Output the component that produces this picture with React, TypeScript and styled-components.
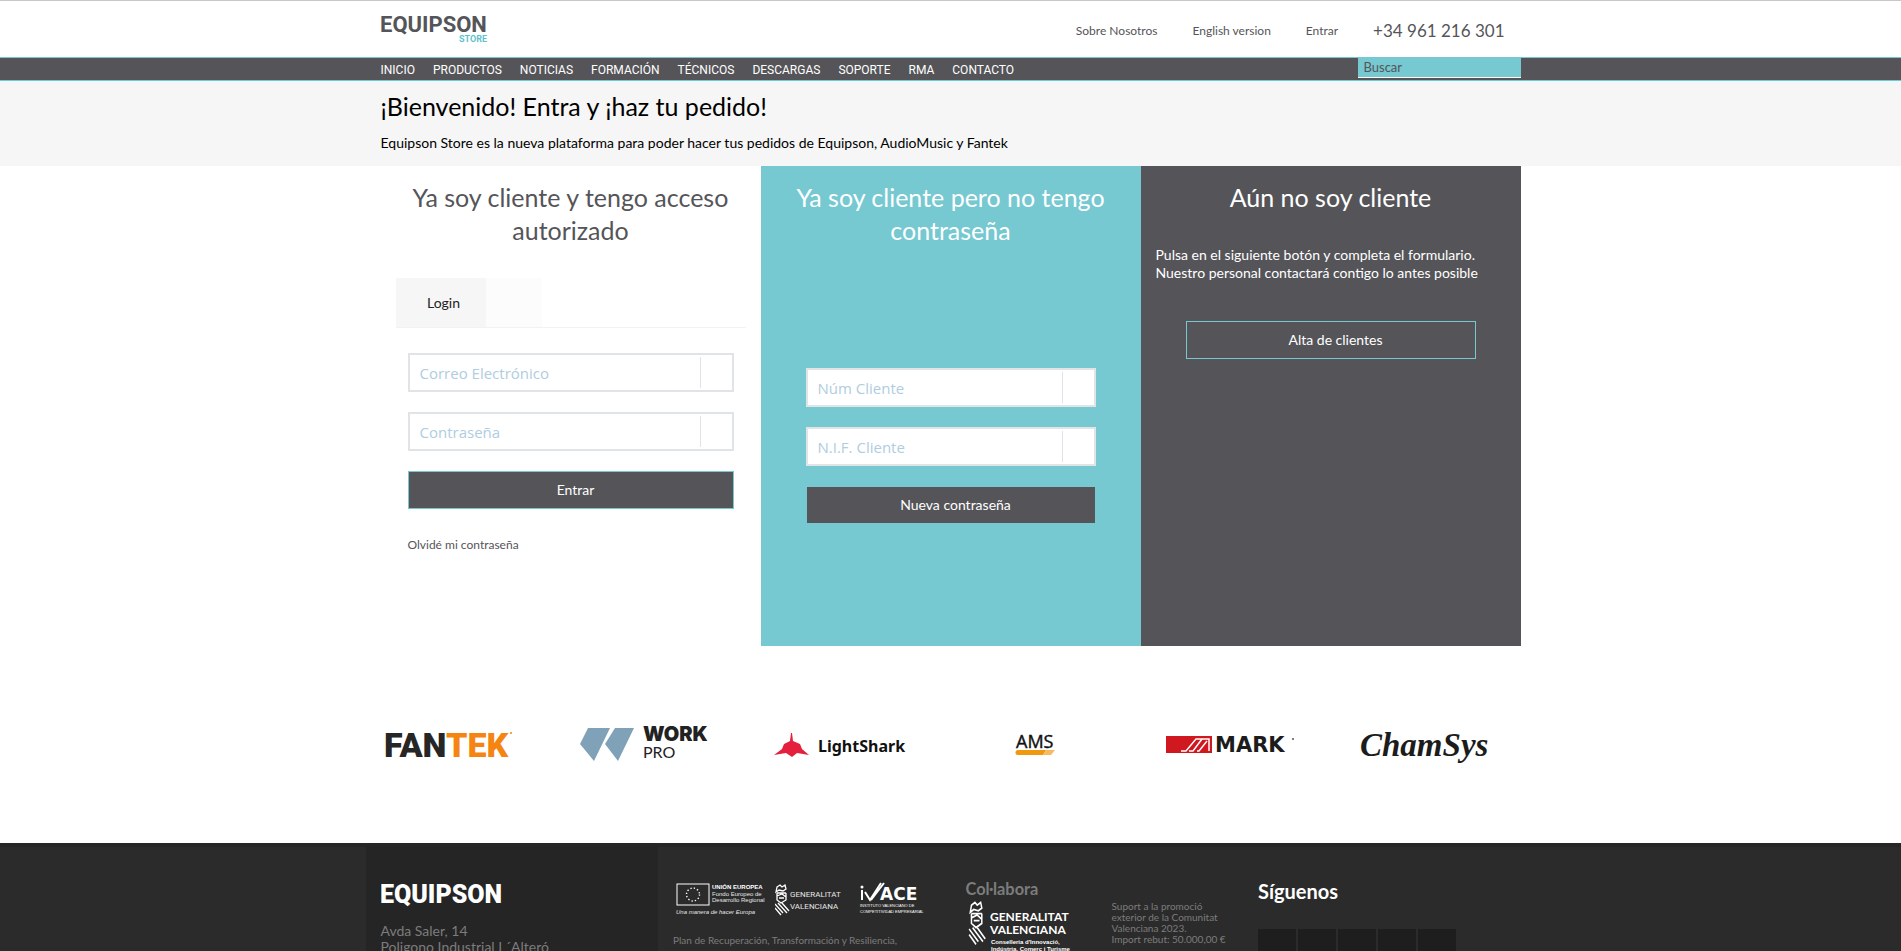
import React from "react";
import styled, { createGlobalStyle } from "styled-components";

const teal = "#76c8d1";
const slate = "#555559";

const GlobalStyle = createGlobalStyle`
  *, *::before, *::after { box-sizing: border-box; }
  html, body { margin: 0; padding: 0; }
  body {
    background: #fff;
    color: ${slate};
    font-family: Lato, "Open Sans", sans-serif;
    font-size: 14px;
    line-height: 18px;
  }
  h1, h2, h3, p, ul { margin: 0; padding: 0; font-weight: 400; }
  ul { list-style: none; }
  a { color: inherit; text-decoration: none; }
  button, input { font: inherit; border-radius: 0; margin: 0; }
  svg { display: block; }
`;

const Page = styled.div`
  display: flex;
  flex-direction: column;
  min-height: 100vh;
  border-top: 1px solid #c8c8c8;
`;

const Container = styled.div`
  width: 100%;
  max-width: 1140px;
  margin: 0 auto;
`;

const TopBar = styled(Container)`
  display: flex;
  justify-content: space-between;
  align-items: center;
  height: 56px;
  padding-right: 16px;
`;

const HomeLink = styled.a`
  padding-bottom: 4px;
`;

const TopLinks = styled.div`
  display: flex;
  align-items: center;
  gap: 35px;
  padding-top: 4px;
  font-size: 12px;
`;

const Phone = styled.a`
  font-size: 17px;
`;

const NavBar = styled.nav`
  background: ${slate};
  border-top: 1px solid ${teal};
  border-bottom: 1px solid ${teal};
`;

const NavInner = styled(Container)`
  display: flex;
  justify-content: space-between;
  align-items: flex-start;
  height: 22px;
`;

const NavList = styled.ul`
  display: flex;
  gap: 18px;
  color: #fff;
  font-family: Roboto, sans-serif;
  font-size: 12px;
  line-height: 24px;
`;

const SearchBox = styled.input`
  width: 163px;
  height: 20px;
  padding: 0 6px 1px;
  border: 0;
  border-bottom: 1px solid #fff;
  background: ${teal};
  color: ${slate};
  font-size: 13px;
  outline: none;
  &::placeholder { color: ${slate}; opacity: 1; }
`;

const Welcome = styled.section`
  background: #f6f6f6;
  border-top: 1px solid #e6fafb;
  color: #000;
  padding: 7px 0 14px;
`;

const WelcomeTitle = styled.h1`
  font-size: 25px;
  line-height: 34px;
  margin-bottom: 11px;
`;

const Panels = styled(Container)`
  display: grid;
  grid-template-columns: repeat(3, 1fr);
  min-height: 480px;
`;

const Panel = styled.section<{ $bg?: string; $fg?: string }>`
  padding: 15px;
  background: ${(p) => p.$bg ?? "#fff"};
  color: ${(p) => p.$fg ?? slate};
`;

const PanelTitle = styled.h2`
  font-size: 25px;
  line-height: 33px;
  text-align: center;
`;

const Tabs = styled.div`
  display: flex;
  margin-top: 31px;
  border-bottom: 1px solid #f2f2f2;
`;

const Tab = styled.button`
  width: 90px;
  height: 49px;
  padding: 0 0 0 6px;
  border: 0;
  background: #f6f6f6;
  color: #222;
`;

const EmptyTab = styled.span`
  width: 56px;
  background: #fcfcfc;
`;

const Form = styled.form<{ $top: number; $side: number }>`
  display: flex;
  flex-direction: column;
  gap: 20px;
  margin: ${(p) => p.$top}px ${(p) => p.$side}px 0;
`;

const FieldFrame = styled.label`
  display: flex;
  align-items: center;
  height: 39px;
  border: 2px solid #e1e4e7;
  background: #fff;
`;

const FieldInput = styled.input`
  flex: 1;
  min-width: 0;
  height: 31px;
  margin-right: 31px;
  padding: 0 10px;
  border: 0;
  border-right: 1px solid #dfe3e8;
  background: transparent;
  color: ${slate};
  font-family: "Open Sans", sans-serif;
  font-size: 15px;
  outline: none;
  &::placeholder { color: #afcde0; opacity: 1; }
`;

const SolidButton = styled.button`
  height: 38px;
  padding: 0 0 0 10px;
  border: 1px solid ${teal};
  background: ${slate};
  color: #fff;
  cursor: pointer;
`;

const SignUpLink = styled.a`
  display: block;
  margin: 39px 30px 0;
  padding-left: 10px;
  border: 1px solid ${teal};
  line-height: 36px;
  text-align: center;
`;

const ForgotLink = styled.a`
  display: inline-block;
  margin: 27px 12px 0;
  font-size: 12px;
`;

const PanelText = styled.p`
  margin-top: 32px;
`;

const Brands = styled.section`
  display: grid;
  grid-template-columns: repeat(6, 1fr);
  width: 100%;
  max-width: 1170px;
  margin: 0 auto;
  padding: 77px 0 76px;
`;

const BrandLink = styled.a`
  padding-left: 15px;
`;

const Footer = styled.footer`
  flex: 1;
  background: #2b2b2b;
  border-top: 4px solid #262626;
  color: #7c7c7c;
`;

const FooterGrid = styled.div`
  display: grid;
  grid-template-columns: repeat(4, 1fr);
  width: 100%;
  max-width: 1170px;
  height: 100%;
  margin: 0 auto;
`;

const FooterColumn = styled.div<{ $dark?: boolean }>`
  padding: 33px 0 0 15px;
  background: ${(p) => (p.$dark ? "#252525" : "transparent")};
`;

const Address = styled.address`
  margin-top: 11px;
  font-style: normal;
  line-height: 16px;
`;

const LogoRow = styled.div`
  display: flex;
  gap: 8px;
`;

const PlanNote = styled.p`
  margin-top: 19px;
  font-size: 10px;
  line-height: 11px;
`;

const Support = styled.div`
  display: grid;
  grid-template-columns: 146px 1fr;
`;

const SupportTitle = styled.h3`
  font-weight: 700;
`;

const SupportNote = styled.p`
  padding-top: 21px;
  font-size: 10px;
  line-height: 11px;
  white-space: nowrap;
`;

const FollowTitle = styled.h3`
  color: #fff;
  font-size: 20px;
  font-weight: 700;
  line-height: 22px;
`;

const SocialList = styled.ul`
  display: flex;
  gap: 2px;
  margin-top: 27px;
`;

const SocialTile = styled.li`
  width: 38px;
  height: 38px;
  background: #1e1e1e;
`;

const StoreLogo = () => (
  <svg width="110" height="32" viewBox="0 0 110 32" role="img" aria-label="Equipson Store">
    <g fontFamily="Roboto, sans-serif" fontWeight="700">
      <text x="-1" y="21" fontSize="22" fill={slate}>EQUIPSON</text>
      <text x="78" y="31" fontSize="9" fill="#5fc3cd">STORE</text>
    </g>
  </svg>
);

const FooterLogo = () => (
  <svg width="124" height="32" viewBox="0 0 124 32" role="img" aria-label="Equipson">
    <text x="-1" y="23" fontFamily="Roboto, sans-serif" fontWeight="900" fontSize="25" fill="#fff">EQUIPSON</text>
  </svg>
);

const FantekLogo = () => (
  <svg width="140" height="44" viewBox="0 0 140 44">
    <text x="3" y="34" fontFamily="Roboto, sans-serif" fontWeight="900" fontSize="34" fill="#262626">
      FAN<tspan fill="#f58410">TEK</tspan>
    </text>
    <circle cx="130" cy="10" r="1" fill="#f58410" />
  </svg>
);

const WorkProLogo = () => (
  <svg width="140" height="44" viewBox="0 0 140 44">
    <path d="M12 5H34L18 38L4 21ZM39 5H58L42 38L29 21Z" fill="#7fa2b8" />
    <text x="67" y="18" fontFamily="Inter, sans-serif" fontWeight="900" fontSize="20" fill="#222">WORK</text>
    <text x="67" y="35" fontFamily="Lato, sans-serif" fontSize="16" fill="#222">PRO</text>
  </svg>
);

const LightSharkLogo = () => (
  <svg width="140" height="44" viewBox="0 0 140 44">
    <path d="M20 10H21L22 18L29 21L31 26L38 32L26 30L21 34L15 30L3 32L11 26L13 21L19 18Z" fill="#e5203f" />
    <text x="47" y="29" fontFamily="Noto Sans, sans-serif" fontWeight="700" fontSize="16" fill="#111">LightShark</text>
  </svg>
);

const AmsLogo = () => (
  <svg width="140" height="44" viewBox="0 0 140 44">
    <text x="50" y="25" fontFamily="Open Sans, sans-serif" fontSize="18" fill="#111" stroke="#111" strokeWidth="0.400">AMS</text>
    <path d="M52 27H80L77 32H52A2.500 2.500 0 0 1 52 27Z" fill="#f0980f" />
    <path d="M80 27H89L85 32H77Z" fill="#f6bb62" />
  </svg>
);

const MarkLogo = () => (
  <svg width="140" height="44" viewBox="0 0 140 44">
    <rect x="5" y="13" width="46" height="17" fill="#cf1820" />
    <path d="M20 28H25L35 16H48V28M28 28H32L41 16M36 28H38L46 18" fill="none" stroke="#fff" strokeWidth="1.500" />
    <text x="54" y="29" fontFamily="DejaVu Sans, sans-serif" fontWeight="700" fontSize="21" fill="#1c1c1c">MARK</text>
    <circle cx="132" cy="16" r="1" fill="#555" />
  </svg>
);

const ChamSysLogo = () => (
  <svg width="140" height="44" viewBox="0 0 140 44">
    <text x="4" y="33" fontFamily="Liberation Serif, serif" fontStyle="italic" fontWeight="700" fontSize="33" fill="#1c1c1c">ChamSys</text>
  </svg>
);

const EuropeLogo = () => (
  <svg width="94" height="36" viewBox="0 0 94 36">
    <rect x="4" y="4" width="32" height="21" fill="none" stroke="#fff" />
    <circle cx="20" cy="14.500" r="6.500" fill="none" stroke="#fff" strokeWidth="1.400" strokeDasharray="1.300 2.100" />
    <g fontFamily="Liberation Sans, sans-serif" fill="#e6e6e6">
      <text x="39" y="9" fontSize="6" fontWeight="700" fill="#fff">UNIÓN EUROPEA</text>
      <text x="39" y="16" fontSize="6">Fondo Europeo de</text>
      <text x="39" y="22" fontSize="6">Desarrollo Regional</text>
      <text x="3" y="34" fontSize="6" fontStyle="italic">Una manera de hacer Europa</text>
    </g>
  </svg>
);

const Crest = () => (
  <g fill="none" stroke="#fff" strokeWidth="1.300">
    <path d="M3 3L6 1L8 3L11 1L12 5L9 7L5 6L2 8ZM3 9H12M3 12L8 10L12 13M3 9V16L7 19L12 16V9M5 14H10" />
    <path d="M1 20L9 29M1 24L7 31M4 19L13 29M8 19L15 27" />
  </g>
);

const GeneralitatLogo = () => (
  <svg width="74" height="36" viewBox="0 0 74 36">
    <g transform="translate(-1 4)"><Crest /></g>
    <g fontFamily="Roboto, sans-serif" fontSize="8" fill="#e6e6e6">
      <text x="15" y="17">GENERALITAT</text>
      <text x="15" y="29">VALENCIANA</text>
    </g>
  </svg>
);

const IvaceLogo = () => (
  <svg width="70" height="36" viewBox="0 0 70 36">
    <path d="M5 10V20M8 12L13 20L24 3M14 20L27 3" fill="none" stroke="#fff" strokeWidth="2" />
    <circle cx="5" cy="7" r="1.500" fill="#fff" />
    <g fontFamily="Liberation Sans, sans-serif" fill="#fff">
      <text x="23" y="20" fontFamily="DejaVu Sans, sans-serif" fontWeight="700" fontSize="17">ACE</text>
      <text x="3" y="27" fontSize="4">INSTITUTO VALENCIANO DE</text>
      <text x="3" y="33" fontSize="4">COMPETITIVIDAD EMPRESARIAL</text>
    </g>
  </svg>
);

const ConselleriaLogo = () => (
  <svg width="112" height="56" viewBox="0 0 112 56">
    <g transform="translate(2 3) scale(1.150 1.400)"><Crest /></g>
    <g fontFamily="Lato, sans-serif" fill="#fff">
      <text x="24" y="23" fontSize="12" fontWeight="700">GENERALITAT</text>
      <text x="24" y="36" fontSize="12" fontWeight="700">VALENCIANA</text>
      <g fontFamily="Liberation Sans, sans-serif" fontSize="6" fontWeight="700">
        <text x="25" y="46">Conselleria d'Innovació,</text>
        <text x="25" y="53">Indústria, Comerç i Turisme</text>
      </g>
    </g>
  </svg>
);

const navItems = ["INICIO", "PRODUCTOS", "NOTICIAS", "FORMACIÓN", "TÉCNICOS", "DESCARGAS", "SOPORTE", "RMA", "CONTACTO"];

const brands = [
  { name: "Fantek", Logo: FantekLogo },
  { name: "Work Pro", Logo: WorkProLogo },
  { name: "LightShark", Logo: LightSharkLogo },
  { name: "AMS", Logo: AmsLogo },
  { name: "Mark", Logo: MarkLogo },
  { name: "ChamSys", Logo: ChamSysLogo },
];

const Field = ({ label, type = "text" }: { label: string; type?: string }) => (
  <FieldFrame>
    <FieldInput type={type} placeholder={label} aria-label={label} />
  </FieldFrame>
);

export default function App() {
  return (
    <Page>
      <GlobalStyle />
      <header>
        <TopBar>
          <HomeLink href="#inicio"><StoreLogo /></HomeLink>
          <TopLinks>
            <a href="#nosotros">Sobre Nosotros</a>
            <a href="#english">English version</a>
            <a href="#entrar">Entrar</a>
            <Phone href="tel:+34961216301">+34 961 216 301</Phone>
          </TopLinks>
        </TopBar>
        <NavBar>
          <NavInner>
            <NavList>
              {navItems.map((item) => (
                <li key={item}><a href={`#${item.toLowerCase()}`}>{item}</a></li>
              ))}
            </NavList>
            <SearchBox type="text" placeholder="Buscar" aria-label="Buscar" />
          </NavInner>
        </NavBar>
      </header>

      <Welcome>
        <Container>
          <WelcomeTitle>¡Bienvenido! Entra y ¡haz tu pedido!</WelcomeTitle>
          <p>Equipson Store es la nueva plataforma para poder hacer tus pedidos de Equipson, AudioMusic y Fantek</p>
        </Container>
      </Welcome>

      <Panels as="main">
        <Panel>
          <PanelTitle>Ya soy cliente y tengo acceso autorizado</PanelTitle>
          <Tabs>
            <Tab type="button">Login</Tab>
            <EmptyTab />
          </Tabs>
          <Form $top={25} $side={12}>
            <Field label="Correo Electrónico" type="email" />
            <Field label="Contraseña" type="password" />
            <SolidButton type="button">Entrar</SolidButton>
          </Form>
          <ForgotLink href="#recuperar">Olvidé mi contraseña</ForgotLink>
        </Panel>
        <Panel $bg={teal} $fg="#fff">
          <PanelTitle>Ya soy cliente pero no tengo contraseña</PanelTitle>
          <Form $top={121} $side={30}>
            <Field label="Núm Cliente" />
            <Field label="N.I.F. Cliente" />
            <SolidButton type="button">Nueva contraseña</SolidButton>
          </Form>
        </Panel>
        <Panel $bg={slate} $fg="#fff">
          <PanelTitle>Aún no soy cliente</PanelTitle>
          <PanelText>
            Pulsa en el siguiente botón y completa el formulario. Nuestro personal contactará contigo lo antes posible
          </PanelText>
          <SignUpLink href="#alta">Alta de clientes</SignUpLink>
        </Panel>
      </Panels>

      <Brands>
        {brands.map(({ name, Logo }) => (
          <BrandLink key={name} href={`#${name}`} aria-label={name}><Logo /></BrandLink>
        ))}
      </Brands>

      <Footer>
        <FooterGrid>
          <FooterColumn $dark>
            <FooterLogo />
            <Address>
              Avda Saler, 14<br />
              Poligono Industrial L´Alteró
            </Address>
          </FooterColumn>
          <FooterColumn>
            <LogoRow>
              <EuropeLogo />
              <GeneralitatLogo />
              <IvaceLogo />
            </LogoRow>
            <PlanNote>Plan de Recuperación, Transformación y Resiliencia,</PlanNote>
          </FooterColumn>
          <FooterColumn>
            <Support>
              <div>
                <SupportTitle>Col·labora</SupportTitle>
                <ConselleriaLogo />
              </div>
              <SupportNote>
                Suport a la promoció<br />
                exterior de la Comunitat<br />
                Valenciana 2023.<br />
                Import rebut: 50.000,00 €
              </SupportNote>
            </Support>
          </FooterColumn>
          <FooterColumn>
            <FollowTitle>Síguenos</FollowTitle>
            <SocialList>
              {[0, 1, 2, 3, 4].map((tile) => <SocialTile key={tile} />)}
            </SocialList>
          </FooterColumn>
        </FooterGrid>
      </Footer>
    </Page>
  );
}
